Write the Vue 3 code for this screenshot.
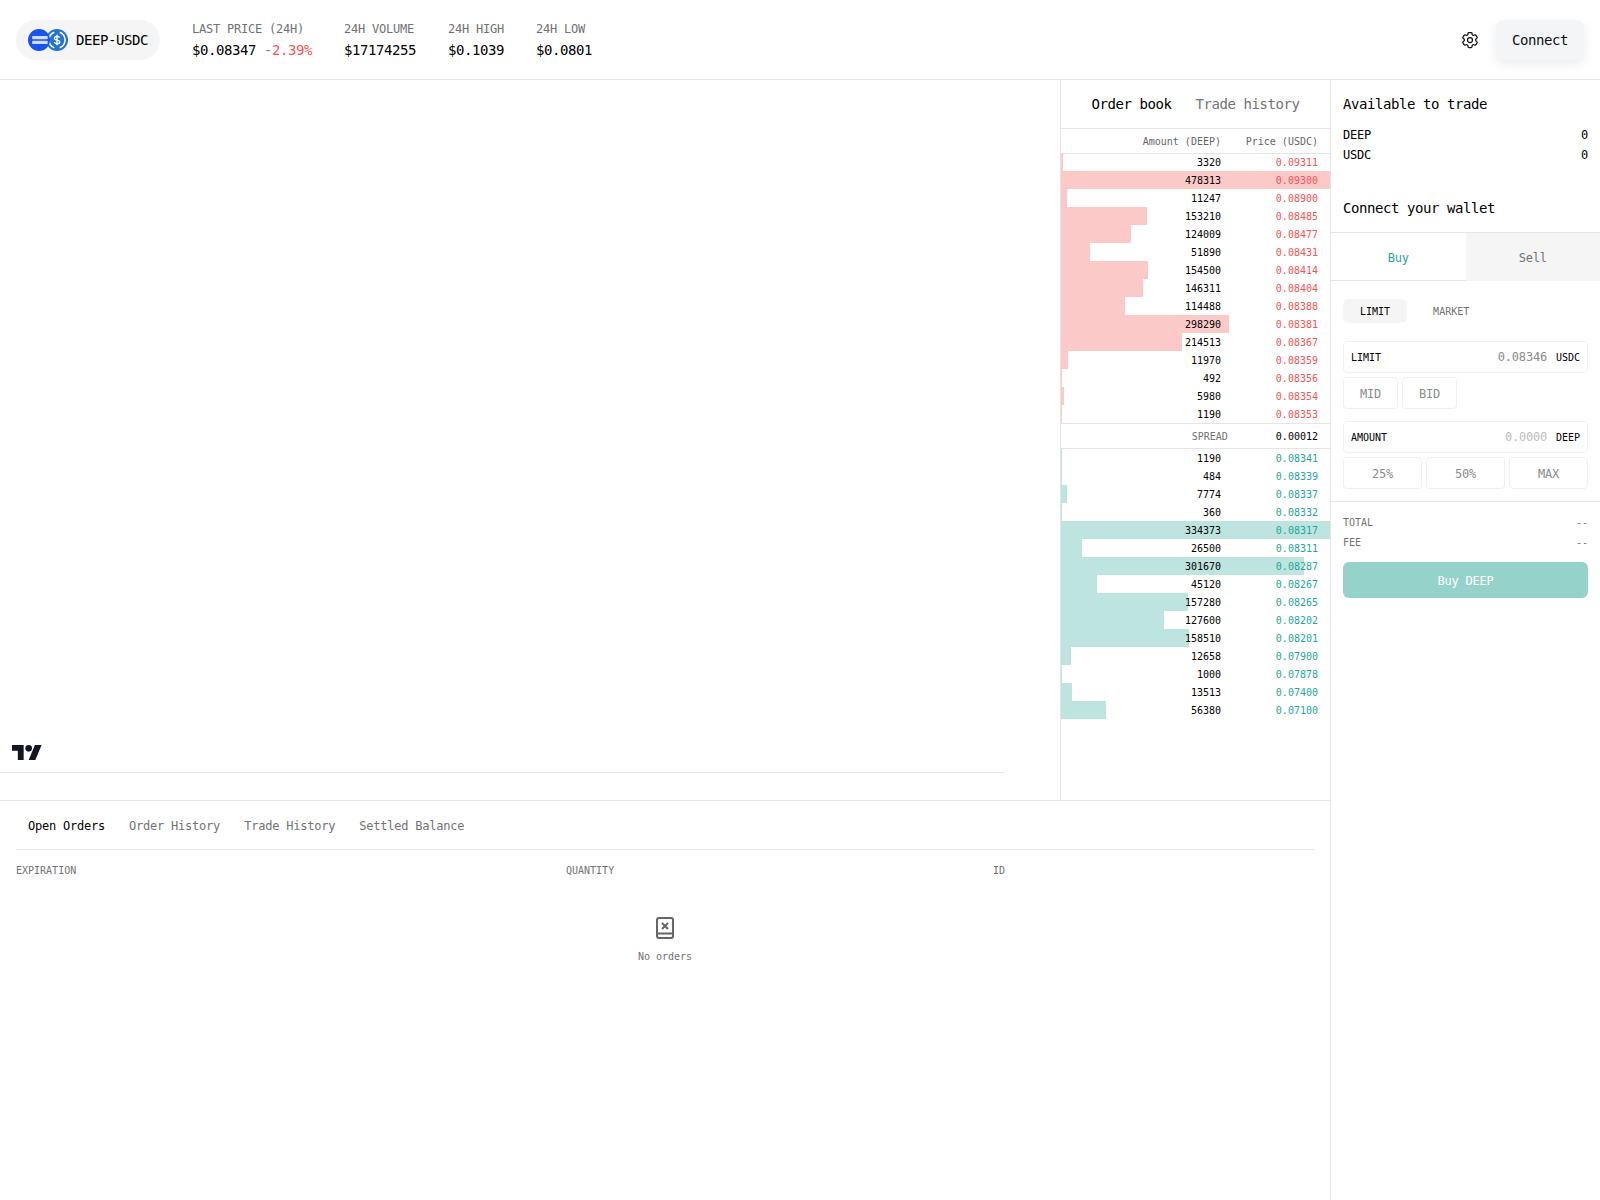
<script setup>
const asks = [
  [3320, "0.09311"], [478313, "0.09300"], [11247, "0.08900"], [153210, "0.08485"],
  [124009, "0.08477"], [51890, "0.08431"], [154500, "0.08414"], [146311, "0.08404"],
  [114488, "0.08388"], [298290, "0.08381"], [214513, "0.08367"], [11970, "0.08359"],
  [492, "0.08356"], [5980, "0.08354"], [1190, "0.08353"],
];
const bids = [
  [1190, "0.08341"], [484, "0.08339"], [7774, "0.08337"], [360, "0.08332"],
  [334373, "0.08317"], [26500, "0.08311"], [301670, "0.08287"], [45120, "0.08267"],
  [157280, "0.08265"], [127600, "0.08202"], [158510, "0.08201"], [12658, "0.07900"],
  [1000, "0.07878"], [13513, "0.07400"], [56380, "0.07100"],
];

const maxAsk = Math.max(...asks.map((r) => r[0]));
const maxBid = Math.max(...bids.map((r) => r[0]));

const stats = [
  { label: "24H VOLUME", value: "$17174255" },
  { label: "24H HIGH", value: "$0.1039" },
  { label: "24H LOW", value: "$0.0801" },
];
const tabs = ["Open Orders", "Order History", "Trade History", "Settled Balance"];
</script>

<template>
  <div class="page">
    <header class="topbar">
      <div class="pair">
        <div class="pair-icons">
          <svg class="coin coin-usdc" viewBox="0 0 24 24">
            <circle cx="12" cy="12" r="12" fill="#2775ca" />
            <path d="M9 3.6a9 9 0 0 0 0 16.8M15 3.6a9 9 0 0 1 0 16.8" fill="none" stroke="#fff" stroke-width="1.6" />
            <path d="M14.8 9.6c-.3-1-1.4-1.6-2.8-1.6-1.6 0-2.8.8-2.8 2 0 2.8 5.8 1.4 5.8 4.1 0 1.2-1.3 2-3 2-1.5 0-2.6-.7-2.9-1.8M12 6.2v11.6" fill="none" stroke="#fff" stroke-width="1.5" />
          </svg>
          <svg class="coin coin-deep" viewBox="0 0 24 24">
            <circle cx="12" cy="12" r="12" fill="#1a52f2" />
            <rect x="4.5" y="7.6" width="17" height="3.6" rx="1" fill="#cfdcff" />
            <rect x="4.5" y="12.8" width="17" height="3.6" rx="1" fill="#cfdcff" />
          </svg>
        </div>
        <span>DEEP-USDC</span>
      </div>
      <div class="stat">
        <div class="stat-label">LAST PRICE (24H)</div>
        <div class="stat-value">$0.08347 <span class="red">-2.39%</span></div>
      </div>
      <div v-for="s in stats" :key="s.label" class="stat">
        <div class="stat-label">{{ s.label }}</div>
        <div class="stat-value">{{ s.value }}</div>
      </div>
      <div class="topbar-right">
        <svg class="gear" viewBox="0 0 24 24" fill="none" stroke="#111" stroke-width="1.5">
          <path stroke-linecap="round" stroke-linejoin="round" d="M9.594 3.94c.09-.542.56-.94 1.11-.94h2.593c.55 0 1.02.398 1.11.94l.213 1.281c.063.374.313.686.645.87.074.04.147.083.22.127.325.196.72.257 1.075.124l1.217-.456a1.125 1.125 0 0 1 1.37.49l1.296 2.247a1.125 1.125 0 0 1-.26 1.431l-1.003.827c-.293.241-.438.613-.43.992a7.723 7.723 0 0 1 0 .255c-.008.378.137.75.43.991l1.004.827c.424.35.534.955.26 1.43l-1.298 2.247a1.125 1.125 0 0 1-1.369.491l-1.217-.456c-.355-.133-.75-.072-1.076.124a6.47 6.47 0 0 1-.22.128c-.331.183-.581.495-.644.869l-.213 1.281c-.09.543-.56.94-1.11.94h-2.594c-.55 0-1.019-.398-1.11-.94l-.213-1.281c-.062-.374-.312-.686-.644-.87a6.52 6.52 0 0 1-.22-.127c-.325-.196-.72-.257-1.076-.124l-1.217.456a1.125 1.125 0 0 1-1.369-.49l-1.297-2.247a1.125 1.125 0 0 1 .26-1.431l1.004-.827c.292-.24.437-.613.43-.991a6.932 6.932 0 0 1 0-.255c.007-.38-.138-.751-.43-.992l-1.004-.827a1.125 1.125 0 0 1-.26-1.43l1.297-2.247a1.125 1.125 0 0 1 1.37-.491l1.216.456c.356.133.751.072 1.076-.124.072-.044.146-.086.22-.128.332-.183.582-.495.644-.869l.214-1.28Z" />
          <circle cx="12" cy="12" r="3" />
        </svg>
        <button class="connect">Connect</button>
      </div>
    </header>

    <div class="body">
      <div class="left">
        <div class="upper">
          <div class="chart">
            <svg class="tv-logo" viewBox="0 4 36 18" fill="#131722">
              <path d="M14 22H7V11H0V4h14v18zM28 22h-8l7.5-18h8L28 22z" />
              <circle cx="20" cy="8" r="4" />
            </svg>
          </div>
          <section class="book">
            <div class="book-tabs">
              <span class="active">Order book</span>
              <span>Trade history</span>
            </div>
            <div class="book-head">
              <span class="amount">Amount (DEEP)</span>
              <span class="price">Price (USDC)</span>
            </div>
            <div v-for="r in asks" :key="r[1]" class="book-row">
              <div class="bar bar-ask" :style="{ width: (r[0] / maxAsk) * 100 + '%' }"></div>
              <span class="amount">{{ r[0] }}</span>
              <span class="price red">{{ r[1] }}</span>
            </div>
            <div class="spread">
              <span class="spread-label">SPREAD</span>
              <span class="spread-value">0.00012</span>
            </div>
            <div v-for="r in bids" :key="r[1]" class="book-row">
              <div class="bar bar-bid" :style="{ width: (r[0] / maxBid) * 100 + '%' }"></div>
              <span class="amount">{{ r[0] }}</span>
              <span class="price teal">{{ r[1] }}</span>
            </div>
          </section>
        </div>

        <section class="orders">
          <div class="order-tabs">
            <span v-for="(t, i) in tabs" :key="t" :class="{ active: i === 0 }">{{ t }}</span>
          </div>
          <div class="order-head">
            <span>EXPIRATION</span>
            <span>QUANTITY</span>
            <span>ID</span>
          </div>
          <div class="empty">
            <svg width="18" height="22" viewBox="0 0 18 22" fill="none" stroke="#666" stroke-width="2">
              <rect x="1" y="1" width="16" height="20" rx="2" />
              <path d="M1 16.5h16M6 6l6 6M12 6l-6 6" />
            </svg>
            <span>No orders</span>
          </div>
        </section>
      </div>

      <aside class="side">
        <div class="wallet">
          <h3>Available to trade</h3>
          <div class="balance"><span>DEEP</span><span>0</span></div>
          <div class="balance"><span>USDC</span><span>0</span></div>
          <h3 class="connect-title">Connect your wallet</h3>
        </div>
        <div class="side-tabs">
          <div class="side-tab buy">Buy</div>
          <div class="side-tab sell">Sell</div>
        </div>
        <div class="form">
          <div class="kinds">
            <span class="kind active">LIMIT</span>
            <span class="kind">MARKET</span>
          </div>
          <div class="field">
            <span class="field-label">LIMIT</span>
            <span class="field-value">0.08346</span>
            <span class="field-unit">USDC</span>
          </div>
          <div class="chips chips-two">
            <button>MID</button>
            <button>BID</button>
          </div>
          <div class="field field-amount">
            <span class="field-label">AMOUNT</span>
            <span class="field-value muted">0.0000</span>
            <span class="field-unit">DEEP</span>
          </div>
          <div class="chips chips-three">
            <button>25%</button>
            <button>50%</button>
            <button>MAX</button>
          </div>
        </div>
        <div class="summary">
          <div class="summary-row"><span>TOTAL</span><span>--</span></div>
          <div class="summary-row"><span>FEE</span><span>--</span></div>
          <button class="submit">Buy DEEP</button>
        </div>
      </aside>
    </div>
  </div>
</template>

<style scoped>
.page {
  width: 1600px;
  height: 1200px;
  display: flex;
  flex-direction: column;
  overflow: hidden;
  background: #fff;
  color: #000;
  font-family: "DejaVu Sans Mono", monospace;
}

.topbar {
  height: 80px;
  box-sizing: border-box;
  flex: none;
  display: flex;
  align-items: center;
  gap: 32px;
  padding: 0 16px;
  border-bottom: 1px solid #e5e5e5;
}

.pair {
  display: flex;
  align-items: center;
  gap: 8px;
  height: 40px;
  padding: 0 12px;
  border-radius: 20px;
  background: #f5f5f5;
  font-size: 14px;
  letter-spacing: -0.43px;
}

.pair-icons {
  display: flex;
  width: 40px;
  height: 22px;
}

.coin {
  width: 22px;
  height: 22px;
  flex: none;
}

.coin-deep {
  order: 1;
  position: relative;
}

.coin-usdc {
  order: 2;
  margin-left: -4px;
}

.stat-label {
  padding-top: 1px;
  font-size: 12px;
  line-height: 16px;
  letter-spacing: -0.22px;
  color: #737373;
}

.stat-value {
  margin-top: 3px;
  font-size: 14px;
  line-height: 20px;
  letter-spacing: -0.43px;
}

.red {
  color: #f75454;
}

.teal {
  color: #26a69a;
}

.topbar-right {
  margin-left: auto;
  display: flex;
  align-items: center;
  gap: 16px;
}

.gear {
  width: 20px;
  height: 20px;
}

.connect {
  width: 88px;
  height: 40px;
  border: 0;
  border-radius: 8px;
  background: #f4f5f7;
  box-shadow: 0 4px 12px rgba(0, 0, 0, 0.08);
  color: #111;
  font: inherit;
  font-size: 14px;
  letter-spacing: -0.43px;
}

.body {
  flex: 1;
  display: flex;
  min-height: 0;
}

.left {
  width: 1330px;
  flex: none;
  display: flex;
  flex-direction: column;
}

.upper {
  height: 720px;
  flex: none;
  display: flex;
  border-bottom: 1px solid #e5e5e5;
}

.chart {
  position: relative;
  width: 1004px;
  height: 692px;
  margin-right: 56px;
  flex: none;
  border-bottom: 1px solid #e5e5e5;
}

.tv-logo {
  position: absolute;
  left: 12px;
  bottom: 12px;
  width: 30px;
  height: 15px;
}

.book {
  flex: 1;
  border-left: 1px solid #e5e5e5;
}

.book-tabs {
  height: 49px;
  box-sizing: border-box;
  display: flex;
  align-items: center;
  justify-content: center;
  gap: 24px;
  border-bottom: 1px solid #e5e5e5;
  font-size: 14px;
  letter-spacing: -0.43px;
  color: #737373;
}

.book-tabs .active {
  color: #000;
}

.book-head {
  height: 25px;
  margin-bottom: -1px;
  box-sizing: border-box;
  display: flex;
  align-items: center;
  padding-right: 12px;
  border-bottom: 1px solid #e5e5e5;
  font-size: 10px;
  color: #666;
}

.book-row {
  position: relative;
  height: 18px;
  display: flex;
  align-items: center;
  padding-right: 12px;
  font-size: 10px;
}

.amount {
  flex: 1;
  text-align: right;
  position: relative;
}

.price {
  width: 97px;
  flex: none;
  text-align: right;
  position: relative;
}

.bar {
  position: absolute;
  left: 0;
  top: 0;
  bottom: 0;
}

.bar-ask {
  background: #fcc9c9;
}

.bar-bid {
  background: #bde4df;
}

.spread {
  height: 26px;
  box-sizing: border-box;
  display: flex;
  align-items: center;
  justify-content: flex-end;
  gap: 48px;
  padding-right: 12px;
  border-top: 1px solid #e5e5e5;
  border-bottom: 1px solid #e5e5e5;
  font-size: 10px;
}

.spread-label {
  color: #737373;
}

.orders {
  flex: 1;
  padding: 0 16px;
}

.order-tabs {
  height: 49px;
  box-sizing: border-box;
  display: flex;
  align-items: center;
  padding-top: 2px;
  border-bottom: 1px solid #e5e5e5;
  font-size: 12px;
  letter-spacing: -0.22px;
  color: #737373;
}

.order-tabs span {
  padding: 0 12px;
}

.order-tabs .active {
  color: #000;
}

.order-head {
  display: grid;
  grid-template-columns: 550px 427px 1fr;
  margin-top: 15px;
  font-size: 10px;
  line-height: 12px;
  color: #737373;
}

.empty {
  width: 1298px;
  margin-top: 40px;
  display: flex;
  flex-direction: column;
  align-items: center;
  gap: 12px;
  font-size: 10px;
  color: #737373;
}

.side {
  flex: 1;
  border-left: 1px solid #e5e5e5;
}

.wallet {
  height: 153px;
  box-sizing: border-box;
  padding: 14px 12px 0;
  border-bottom: 1px solid #e5e5e5;
}

.wallet h3 {
  margin: 0 0 13px;
  font-size: 14px;
  line-height: 20px;
  font-weight: 400;
  letter-spacing: -0.43px;
}

.wallet .connect-title {
  margin-top: 35px;
}

.balance {
  display: flex;
  justify-content: space-between;
  font-size: 12px;
  line-height: 16px;
  letter-spacing: -0.22px;
  margin-bottom: 4px;
}

.side-tabs {
  display: flex;
  height: 48px;
}

.side-tab {
  flex: 1;
  display: flex;
  align-items: center;
  justify-content: center;
  padding-top: 2px;
  font-size: 12px;
  letter-spacing: -0.22px;
  box-sizing: border-box;
}

.buy {
  color: #26a69a;
  border-bottom: 1px solid #e5e5e5;
}

.sell {
  color: #737373;
  background: #f5f5f5;
}

.form {
  padding: 18px 12px 12px;
  border-bottom: 1px solid #e5e5e5;
}

.kinds {
  display: flex;
  gap: 9px;
  margin-bottom: 18px;
}

.kind {
  height: 24px;
  padding: 0 17px;
  display: flex;
  align-items: center;
  border-radius: 6px;
  font-size: 10px;
  color: #737373;
}

.kind.active {
  background: #f5f5f5;
  color: #000;
}

.field {
  height: 32px;
  box-sizing: border-box;
  display: flex;
  align-items: center;
  padding: 0 7px;
  border: 1px solid #f0f0f0;
  border-radius: 4px;
  font-size: 10px;
}

.field-amount {
  margin-top: 12px;
}

.field-value {
  margin-left: auto;
  margin-right: 9px;
  font-size: 12px;
  letter-spacing: -0.22px;
  color: #8c8c8c;
}

.field-value.muted {
  color: #bdbdbd;
}

.chips {
  display: flex;
  gap: 4px;
  margin-top: 4px;
}

.chips button {
  height: 32px;
  padding: 2px 0 0;
  border: 1px solid #f0f0f0;
  border-radius: 4px;
  background: #fff;
  font: inherit;
  font-size: 12px;
  letter-spacing: -0.22px;
  color: #8c8c8c;
}

.chips-two button {
  width: 55px;
}

.chips-three button {
  flex: 1;
}

.summary {
  padding: 15px 12px 0;
}

.summary-row {
  display: flex;
  justify-content: space-between;
  font-size: 10px;
  line-height: 12px;
  margin-bottom: 8px;
  color: #737373;
}

.submit {
  width: 100%;
  height: 36px;
  margin-top: 5px;
  padding: 2px 0 0;
  border: 0;
  border-radius: 6px;
  background: #94d2ca;
  color: #fff;
  font: inherit;
  font-size: 12px;
  letter-spacing: -0.22px;
}
</style>
